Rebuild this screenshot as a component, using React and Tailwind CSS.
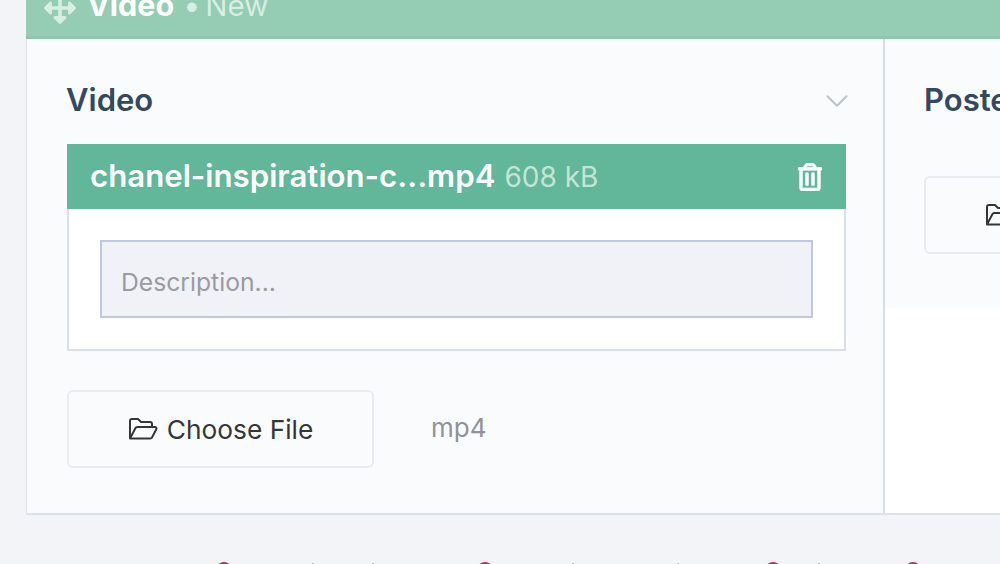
import { ChevronDown } from "lucide-react";
import { FaArrowsAlt, FaRegTrashAlt } from "react-icons/fa";

const font = { fontFamily: "Inter, 'Liberation Sans', sans-serif" };

function FolderIcon() {
  return (
    <svg viewBox="0 0 30 22" className="w-[30px] h-[22px] shrink-0" fill="none" stroke="currentColor" strokeWidth="2" strokeLinejoin="round">
      <path d="M2 20V3a2 2 0 0 1 2-2h6l3 3h9a2 2 0 0 1 2 2v3" />
      <path d="M2 20.500L7.500 10a2 2 0 0 1 1.700-1H27a1.500 1.500 0 0 1 1.300 2.200L24 19.500a2 2 0 0 1-1.700 1H2z" />
    </svg>
  );
}

function ChooseFile({ className }) {
  return (
    <button
      className={`h-[78px] flex items-center justify-center gap-[9px] rounded-[6px] border-2 border-[#e9ebf0] bg-[#fafbfd] text-[#363636] text-[26.300px] shrink-0 ${className}`}
    >
      <FolderIcon />
      <span className="mt-[1px]">Choose File</span>
    </button>
  );
}

export default function App() {
  return (
    <div
      className="h-[564px] w-[1000px] overflow-hidden bg-[#f3f4f8] pl-[26px] flex flex-col antialiased"
      style={font}
    >
      {/* Card header, cut off by the top of the window */}
      <div className="h-[39px] shrink-0 bg-[#94cdb4] border-b-[3px] border-[#8cc6ad] flex items-end pl-[18px] pb-[18px] overflow-hidden">
        <FaArrowsAlt className="w-[32px] h-[32px] text-[#d6eee3] shrink-0 mb-[-6px]" />
        <div className="flex text-[30.500px] leading-[36px] whitespace-nowrap mb-[-5px] ml-[11px]">
          <span className="font-bold text-white">Video</span>
          <span className="text-[#d6eee3] ml-[9px]">•</span>
          <span className="text-[#d6eee3] ml-[5px] text-[29.500px]">New</span>
        </div>
      </div>

      <div className="h-[476px] shrink-0 flex border-l border-b-2 border-[#dbe2ec] bg-white">
        {/* Video column */}
        <div className="w-[858px] shrink-0 bg-[#fafbfd] border-r-2 border-[#d5dde8] pl-[40px] pr-[37px] flex flex-col">
          <div className="h-[105px] shrink-0 flex items-center justify-between pt-[18px]">
            <h3 className="text-[31px] font-semibold text-[#34495e] ml-[-1px]">Video</h3>
            <ChevronDown className="w-[38px] h-[38px] text-[#bcc3cc] mr-[-10px]" strokeWidth={1.3} />
          </div>

          <div className="h-[65px] shrink-0 bg-[#62b699] flex items-center pl-[23px] pr-[24px]">
            <span className="text-[31.200px] font-semibold text-white">chanel-inspiration-c...mp4</span>
            <span className="text-[28px] text-[#c5e4d7] ml-[9px]">608 kB</span>
            <FaRegTrashAlt className="w-[24px] h-[28px] text-white ml-auto" stroke="currentColor" strokeWidth={14} />
          </div>

          <div className="h-[142px] shrink-0 bg-white border-2 border-t-0 border-[#d8dfe9] px-[31px] pt-[31px]">
            <div className="h-[78px] border-2 border-[#bfc8dc] bg-[#f1f2f7] flex items-center pl-[19px] pt-[8px] text-[24.700px] text-[#9a9aa0]">
              Description...
            </div>
          </div>

          <div className="flex items-center mt-[39px]">
            <ChooseFile className="w-[307px]" />
            <span className="text-[26px] text-[#8f9299] ml-[57px] mt-[-3px]">mp4</span>
          </div>
        </div>

        {/* Poster column */}
        <div className="flex-1 min-w-0 overflow-hidden">
          <div className="h-[269px] bg-[#fafbfd] pl-[39px]">
            <div className="h-[105px] flex items-center pt-[18px]">
              <h3 className="text-[31px] font-semibold text-[#34495e] whitespace-nowrap">Poster</h3>
            </div>
            <ChooseFile className="w-[307px] mt-[32px]" />
          </div>
        </div>
      </div>

      {/* Tops of the next row's text, peeking in at the bottom edge */}
      <div className="relative flex-1">
        <span className="absolute left-[190px] top-[47px] w-[16px] h-[16px] rounded-full bg-[#b8325a]" />
        <span className="absolute left-[451px] top-[47px] w-[16px] h-[16px] rounded-full bg-[#b8325a]" />
        <span className="absolute left-[739px] top-[47px] w-[16px] h-[16px] rounded-full bg-[#b8325a]" />
        <span className="absolute left-[879px] top-[47px] w-[16px] h-[16px] rounded-full bg-[#b8325a]" />
        <span className="absolute left-[286px] top-[48px] w-[2px] h-[1px] bg-[#b4b6bd]" />
        <span className="absolute left-[346px] top-[48px] w-[2px] h-[1px] bg-[#b4b6bd]" />
        <span className="absolute left-[546px] top-[48px] w-[2px] h-[1px] bg-[#b4b6bd]" />
        <span className="absolute left-[651px] top-[48px] w-[2px] h-[1px] bg-[#b4b6bd]" />
        <span className="absolute left-[792px] top-[48px] w-[2px] h-[1px] bg-[#b4b6bd]" />
      </div>
    </div>
  );
}
